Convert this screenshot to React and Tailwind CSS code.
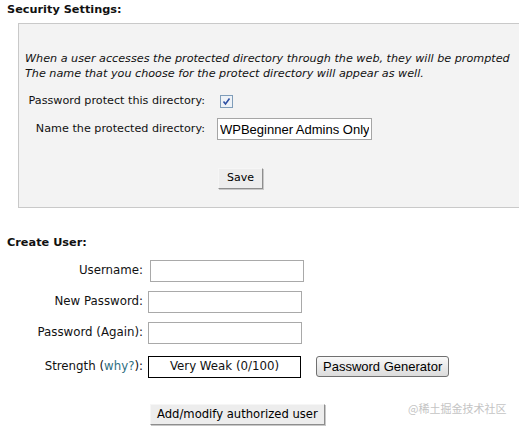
import { useState } from 'react'

const labelFont = { fontFamily: '"DejaVu Sans", Verdana, sans-serif' }
const arial = { fontFamily: '"Liberation Sans", Arial, sans-serif' }

function GrayButton({ children, className = '' }) {
  return (
    <button
      className={`bg-[#ededed] text-black border border-t-[#f6f6f6] border-l-[#f6f6f6] border-r-[#8e8e8e] border-b-[#8e8e8e] shadow-[1px_1px_0_#c8c8c8] ${className}`}
    >
      {children}
    </button>
  )
}

export default function App() {
  const [checked, setChecked] = useState(true)

  return (
    <div
      className="w-[519px] h-[427px] overflow-hidden bg-white text-[11px] text-[#111] relative"
      style={labelFont}
    >
      <div className="pl-[7px] pt-[3px] font-bold text-[11.3px] leading-[14px]">Security Settings:</div>

      <div className="ml-[18px] mt-[6px] w-[560px] h-[185px] bg-[#f3f3f3] border border-[#c9c9c9] pl-[6px] pt-[27px]">
        <p className="italic text-[11.2px] leading-[15px] whitespace-nowrap">
          When a user accesses the protected directory through the web, they will be prompted
          <br />
          The name that you choose for the protect directory will appear as well.
        </p>

        <div className="grid grid-cols-[180px_auto] gap-x-[12px] items-center mt-[9px] w-fit text-[11.2px]">
          <div className="text-right">Password protect this directory:</div>
          <div className="h-[22px] flex items-center">
            <label className="ml-[3px] w-[13px] h-[13px] border border-[#7f9db9] bg-[#eef2f7] flex items-center justify-center cursor-pointer" onClick={() => setChecked(v => !v)}>
              {checked && (
                <svg width="9" height="9" viewBox="0 0 9 9">
                  <path d="M1.5 4.5 L3.5 7 L7.5 1.5" fill="none" stroke="#2d4fa3" strokeWidth="1.6" />
                </svg>
              )}
            </label>
          </div>

          <div className="text-right mt-[6px]">Name the protected directory:</div>
          <div className="mt-[6px]">
            <input
              defaultValue="WPBeginner Admins Only"
              className="w-[155px] h-[22px] border border-[#a5a5a5] bg-white px-[2px] text-[13px] text-black outline-none"
              style={arial}
            />
          </div>

          <div />
          <div className="mt-[28px]">
            <GrayButton className="ml-[1px] h-[21px] px-[8px] text-[11px]">Save</GrayButton>
          </div>
        </div>
      </div>

      <div className="pl-[7px] mt-[28px] font-bold text-[11.3px] leading-[14px]">Create User:</div>

      <div className="grid grid-cols-[143px_auto] gap-x-[5px] items-center mt-[10px] w-fit text-[11.8px]">
        <div className="text-right">Username:</div>
        <div>
          <input className="ml-[2px] w-[154px] h-[22px] border border-[#a9a9a9] bg-white outline-none" />
        </div>

        <div className="text-right mt-[9px]">New Password:</div>
        <div className="mt-[9px]">
          <input type="password" className="w-[154px] h-[22px] border border-[#a9a9a9] bg-white outline-none" />
        </div>

        <div className="text-right mt-[9px]">Password (Again):</div>
        <div className="mt-[9px]">
          <input type="password" className="w-[154px] h-[22px] border border-[#a9a9a9] bg-white outline-none" />
        </div>

        <div className="text-right mt-[12px]">
          Strength (<a className="text-[#2f6f82]">why?</a>):
        </div>
        <div className="mt-[12px] flex items-start gap-[15px]">
          <div className="w-[153px] h-[22px] border border-black bg-white flex items-center justify-center">
            Very Weak (0/100)
          </div>
          <button
            className="h-[21px] px-[6px] rounded-[3px] border border-[#707070] bg-gradient-to-b from-[#f9f9f9] to-[#dcdcdc] text-[13px] text-black leading-none"
            style={arial}
          >
            Password Generator
          </button>
        </div>

        <div />
        <div className="mt-[26px]">
          <GrayButton className="ml-[2px] h-[21px] px-[6px] text-[11.6px]">Add/modify authorized user</GrayButton>
        </div>
      </div>

      <div
        className="absolute left-[408px] top-[402px] text-[11px] leading-[13px] text-[#c4c4c4]"
        style={{ fontFamily: '"Noto Sans CJK SC", sans-serif' }}
      >
        @稀土掘金技术社区
      </div>
    </div>
  )
}
